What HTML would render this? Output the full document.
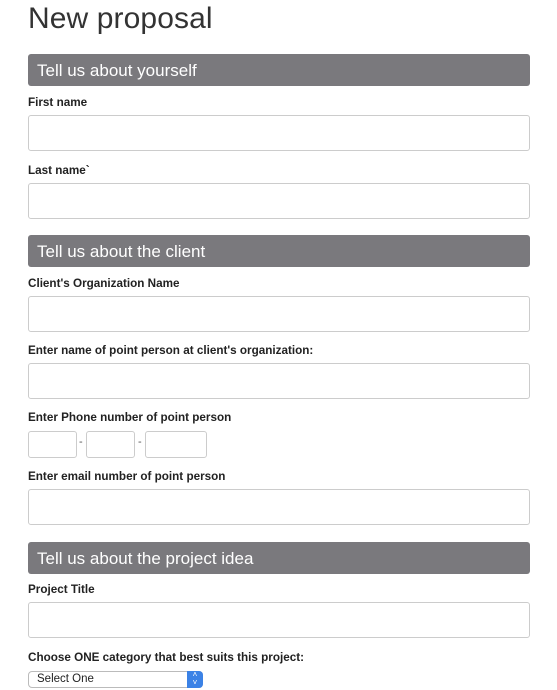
<!DOCTYPE html>
<html><head><style>
body{margin:0;width:557px;height:690px;background:#fff;position:relative;overflow:hidden;font-family:"Liberation Sans",sans-serif}
.a{position:absolute}
h1{position:absolute;left:28px;top:2px;margin:0;font-weight:normal;font-size:30px;color:#333;letter-spacing:0.1px}
.h{position:absolute;left:28px;width:502px;height:32px;background:#7a797d;border-radius:3px;color:#fff;font-size:17px;line-height:33px;box-sizing:border-box;padding-left:9px}
.l{position:absolute;left:28px;font-size:11.7px;font-weight:bold;color:#222;line-height:14px}
.i{position:absolute;left:28px;width:502px;height:36px;border:1px solid #ccc;border-radius:3px;box-sizing:border-box;background:#fff}
.p{position:absolute;top:431px;height:27px;border:1px solid #ccc;border-radius:3px;box-sizing:border-box}
.d{position:absolute;top:436px;font-size:11px;color:#555}
</style></head><body>
<h1>New proposal</h1>
<div class="h" style="top:54px">Tell us about yourself</div>
<div class="l" style="top:96px">First name</div>
<div class="i" style="top:115px"></div>
<div class="l" style="top:164px">Last name`</div>
<div class="i" style="top:183px"></div>
<div class="h" style="top:235px">Tell us about the client</div>
<div class="l" style="top:277px">Client's Organization Name</div>
<div class="i" style="top:296px"></div>
<div class="l" style="top:344px">Enter name of point person at client's organization:</div>
<div class="i" style="top:363px"></div>
<div class="l" style="top:411px">Enter Phone number of point person</div>
<div class="p" style="left:28px;width:49px"></div>
<div class="d" style="left:79px">-</div>
<div class="p" style="left:86px;width:49px"></div>
<div class="d" style="left:138px">-</div>
<div class="p" style="left:145px;width:62px"></div>
<div class="l" style="top:470px">Enter email number of point person</div>
<div class="i" style="top:489px"></div>
<div class="h" style="top:542px">Tell us about the project idea</div>
<div class="l" style="top:583px">Project Title</div>
<div class="i" style="top:602px"></div>
<div class="l" style="top:651px">Choose ONE category that best suits this project:</div>
<div class="a" style="left:28px;top:671px;width:175px;height:17px;border:1px solid #bbb;border-radius:4px;box-sizing:border-box;font-size:11.5px;line-height:15px;padding-left:8px;color:#222">Select One
<div class="a" style="right:-1px;top:-1px;width:16px;height:17px;background:#3b82e6;border-radius:0 4px 4px 0;color:#fff;font-size:8px;line-height:8px;text-align:center">˄<br>˅</div></div>
</body></html>
